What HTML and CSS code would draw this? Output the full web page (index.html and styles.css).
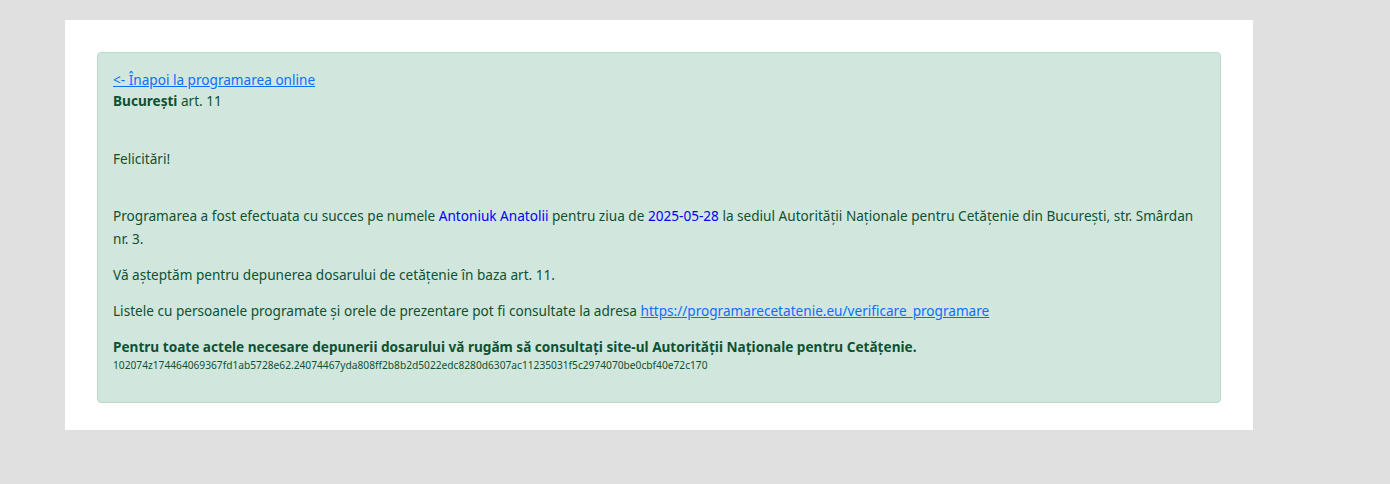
FILE: index.html
```html
<!DOCTYPE html>
<html lang="ro">
<head>
	<meta charset="UTF-8">
	<title>Programare</title>
	<link rel="stylesheet" href="styles.css">
</head>
<body>
	<!-- container alb -->
	<div class="page">
		<!-- mesaj de confirmare -->
		<div class="alert">
			<div class="head">
				<a href="#">&lt;- Înapoi la programarea online</a><br>
				<b>București</b> art. 11
			</div>
			<p class="hello">Felicitări!</p>
			<p>Programarea a fost efectuata cu succes pe numele <span class="hl">Antoniuk Anatolii</span> pentru ziua de <span class="hl">2025-05-28</span> la sediul Autorității Naționale pentru Cetățenie din București, str. Smârdan nr.&nbsp;3.</p>
			<p>Vă așteptăm pentru depunerea dosarului de cetățenie în baza art. 11.</p>
			<p>Listele cu persoanele programate și orele de prezentare pot fi consultate la adresa <a href="#">https://programarecetatenie.eu/verificare_programare</a></p>
			<p class="note"><b>Pentru toate actele necesare depunerii dosarului vă rugăm să consultați site-ul Autorității Naționale pentru Cetățenie.</b></p>
			<p class="code">102074z174464069367fd1ab5728e62.24074467yda808ff2b8b2d5022edc8280d6307ac11235031f5c2974070be0cbf40e72c170</p>
		</div>
	</div>
</body>
</html>
```

FILE: styles.css
```css
html,body{
	margin:0;
	padding:0;
}
body{
	background:#e0e0e0;
	font-family:"Noto Sans","Open Sans",sans-serif;
	font-size:13.6px;
	color:#0f5132;
	height:484px;
}
.page{
	margin:20px 0 0 65px;
	width:1188px;
	padding:32px 32px 27px;
	box-sizing:border-box;
	background:#fff;
}
.alert{
	background:#d1e7dd;
	border:1px solid #badbcc;
	border-radius:4px;
	padding:16px 15px 16px;
}
.alert a{
	color:#0d6efd;
}
.head{
	line-height:21px;
}
.alert p{
	margin:0 0 13px;
	line-height:23px;
}
.alert .hello{
	margin:36px 0 34px;
}
.hl{
	color:#0000ff;
}
.alert .note{
	margin:0;
}
.alert .code{
	font-size:10.2px;
	line-height:15px;
	margin:0 0 13px;
}
```
